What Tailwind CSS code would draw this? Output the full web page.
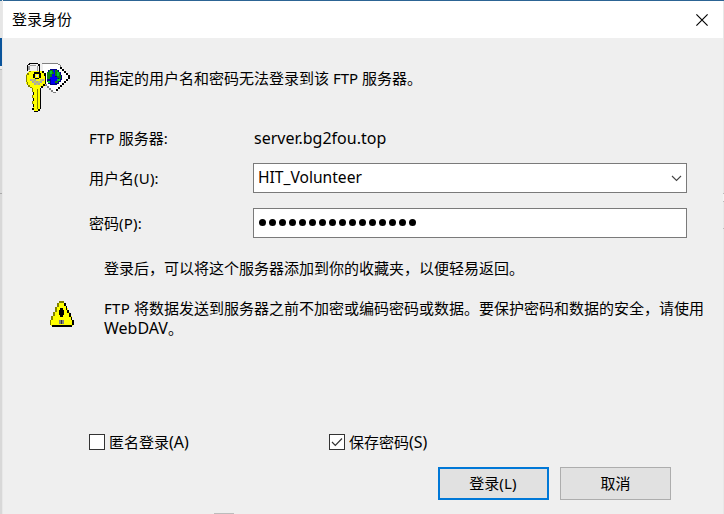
<!DOCTYPE html>
<html lang="zh-CN"><head><meta charset="utf-8"><title>登录身份</title>
<script src="https://cdn.jsdelivr.net/npm/@tailwindcss/browser@4"></script></head>
<body class="w-[724px] h-[514px] overflow-hidden bg-[#efefef] text-black text-[15px] leading-[20px] font-['Noto_Sans','Noto_Sans_CJK_SC',sans-serif]">
<div class="flex w-[724px] h-[514px]">
  <div class="w-[3px] shrink-0 flex flex-col border-r border-[#e8e8e8] bg-[#d8d8d8]">
    <div class="h-px bg-[#2b6a98]"></div><div class="h-[37px] bg-[#e6e6e6]"></div><div class="h-[28px] bg-[#0a549b]"></div><div class="h-[3px] bg-[#eeeeee]"></div><div class="h-px bg-[#b8b8b8]"></div><div class="h-[123px]"></div><div class="h-px bg-[#aaaaaa]"></div>
  </div>
  <main class="relative w-[720px] shrink-0 flex flex-col">
    <header class="h-[38px] shrink-0 border-t border-[#2c6494] bg-white flex items-center justify-between pl-[9px] pr-[15px]">
      <h1 class="whitespace-nowrap pb-[2px]">登录身份</h1>
      <svg class="w-[12px] h-[12px]" viewBox="0 0 12 12"><path d="M.4.4 11.6 11.6M11.6.4.4 11.6" stroke="#000" stroke-width="1.15"/></svg>
    </header>
    <section class="h-[90px] shrink-0 flex">
      <svg class="ml-[22px] mt-[24px] w-[46px] h-[52px] shrink-0" viewBox="0 0 46 52" shape-rendering="crispEdges">
        <path d="M18 2H33L45 14V16L31 30H28L17 19Z" fill="#fff"/>
        <path d="M17 1h16v1H17zM33 2h2v1h-2zM35 3h1v2h-1zM18 20h2v2h-2zM20 22h2v2h-2zM22 24h2v2h-2zM24 26h2v2h-2zM26 28h2v2h-2zM28 30h3v1h-3z" fill="#808080"/>
        <path d="M35 5h2v2h-2zM37 7h2v2h-2zM39 9h2v2h-2zM41 11h2v2h-2zM43 13h2v4h-2zM41 17h2v2h-2zM39 19h2v2h-2zM37 21h2v2h-2zM35 23h2v2h-2zM33 25h2v2h-2zM31 27h2v2h-2z"/>
        <path d="M25 7h7v1h2v2h2v3h1v5h-1v2h-2v2h-2v1h-7v-1h-2v-2h-1V10h1V8h2z" fill="#00008b"/>
        <path d="M27 8h4v3h-1v4h3v4h-3v3h-4v-5h-2v-3h2v-3h1z" fill="#0000f0"/>
        <path d="M22 10h2V8h4v2h1v2h-2v3h-2v2h-3zM30 8h3v2h2v3h1v4h-2v-1h-2v-2h-2zM32 17h3v2h-2v2h-3v-2h2zM22 19h3v2h-2z" fill="#108010"/>
        <path d="M25 9h2v3h-2zM32 10h2v4h-2zM32 17h3v2h-3zM23 19h2v2h-2z" fill="#00c830"/>
        <path d="M4 9h13l4 4v9l-3 3h-3v22l-2 2H9l-2-2V26H5l-3-3-1-3v-7z" fill="#ff0"/>
        <path d="M4 9h2v1H4zM2 11h2v2H2zM1 13h1v7H1zM2 20h1v3H2zM3 23h2v2H3zM5 25h2v1H5zM7 26h1v4H7zM7 33h1v3H7zM7 39h1v3H7zM12 27h1v20h-1z" fill="#808000"/>
        <path d="M17 9h2v2h-2zM19 11h2v3h-2zM20 14h1v8h-1zM18 22h2v2h-2zM16 24h2v2h-2zM15 26h1v21h-1zM13 47h2v2h-2zM9 49h4v1H9zM7 46h2v2H7zM8 30h1v3H8zM8 36h1v3H8zM8 42h1v3H8z"/>
        <path d="M7 30h1v3H7zM7 36h1v3H7zM7 42h1v4H7z" fill="#efefef"/>
        <path d="M5 17h2v2H5zM7 19h2v2H7zM9 17h2v2H9zM9 21h2v2H9zM11 19h2v2h-2zM13 21h2v2h-2zM15 19h2v2h-2zM17 17h2v2h-2z" fill="#a8a8a8"/>
        <path d="M7 17h2v2H7zM9 19h2v2H9zM11 21h2v2h-2zM13 19h2v2h-2zM15 17h2v2h-2z" fill="#c8c85a"/>
        <path d="M4 1h9v1H4zM3 2h2v1H3zM2 3h1v6H2zM13 2h2v2h-2zM14 4h1v8h-1zM9 10h5v2H9zM8 12h2v4H8zM10 16h4v1h-4zM14 11h2v5h-2z"/>
        <path d="M5 3h6v1H5zM3 4h2v4H3zM12 4h1v5h-1z" fill="#999"/>
        <path d="M11 13h2v2h-2z" fill="#ddd"/>
      </svg>
      <p class="ml-[18px] mt-[30px] whitespace-nowrap">用指定的用户名和密码无法登录到该 <span>FTP</span> 服务器。</p>
    </section>
    <section class="ml-[86px] w-[598px] shrink-0 grid grid-cols-[164px_434px]">
      <div class="h-[20px]"><span class="tracking-[0.2px]">FTP</span> 服务器:</div><div class="pl-px text-[16px]">server.bg2fou.top</div>
      <label class="mt-[15px] h-[30px] leading-[31px]">用户名<span class="tracking-[0.2px]">(U):</span></label>
      <div class="mt-[15px] h-[30px] bg-white border border-[#7a7a7a] flex items-center justify-between pl-[4px] pr-[4px]"><span class="text-[15.6px] pb-[2px]">HIT_Volunteer</span><svg class="w-[11px] h-[7px]" viewBox="0 0 11 7" fill="none"><path d="M1 1 5.5 5.5 10 1" stroke="#444" stroke-width="1.1"/></svg></div>
      <label class="mt-[15px] h-[30px] leading-[31px]">密码<span class="tracking-[0.2px]">(P):</span></label>
      <div class="mt-[15px] h-[30px] bg-white border border-[#7a7a7a] flex items-center gap-[3px] pl-[4.5px] pb-px"><script>for(let i=0;i<16;i++)document.write('<i class="w-[7px] h-[7px] rounded-full bg-black"></i>')</script></div>
    </section>
    <p class="mt-[20px] ml-[101px] whitespace-nowrap">登录后，可以将这个服务器添加到你的收藏夹，以便轻易返回。</p>
    <section class="mt-[20px] h-[136px] shrink-0 flex">
      <svg class="ml-[47px] mt-[3px] w-[24px] h-[27px] shrink-0" viewBox="0 0 24 27" shape-rendering="crispEdges">
        <path d="M9 1h5v2h2v4h2v4h2v4h2v4h1v6H1v-6h2v-4h2v-4h2V6h2z" fill="#ff0"/>
        <path d="M9 0h5v2H9zM7 2h2v4H7zM5 6h2v5H5zM3 11h2v4H3zM1 15h2v4H1zM0 19h1v5H0z" fill="#808000"/>
        <path d="M14 2h2v3h-2zM16 5h1v4h-1zM17 9h2v3h-2zM19 12h2v4h-2zM21 16h1v3h-1zM22 19h2v5h-2zM2 24h20v2H2zM10 7h3v2h1v5h-1v2h-3v-2H9V9h1z"/><path d="M9 19h5v4H9z" fill="#808080"/><path d="M11 19h1v4h-1z" fill="#333"/>
      </svg>
      <p class="ml-[30px] whitespace-nowrap"><span class="tracking-[0.3px]">FTP</span> 将数据发送到服务器之前不加密或编码密码或数据。要保护密码和数据的安全，请使用<br><span class="text-[16px]">WebDAV</span>。</p>
    </section>
    <section class="ml-[86px] h-[16px] shrink-0 flex items-center whitespace-nowrap">
      <label class="w-[240px] flex items-center gap-[4px]"><span class="size-[16px] border border-[#333] bg-white"></span><span>匿名登录<span class="text-[16px]">(A)</span></span></label>
      <label class="flex items-center gap-[4px]"><span class="size-[16px] border border-[#333] bg-white"><svg viewBox="0 0 14 14" fill="none"><path d="M2 7 5.3 10.3 12 3.5" stroke="#333" stroke-width="1.2"/></svg></span><span>保存密码<span class="text-[16px]">(S)</span></span></label>
    </section>
    <footer class="mt-[17px] ml-[435px] h-[33px] shrink-0 flex gap-[11px]">
      <button class="w-[111px] border-2 border-[#0078d7] bg-[#e1e1e1] pb-[2px] pr-px">登录<span class="tracking-[0.2px]">(L)</span></button><button class="w-[111px] border border-[#adadad] bg-[#e1e1e1] pb-[2px]">取消</button>
    </footer>
    <div class="mt-[13px] ml-[211px] w-[20px] h-px bg-[#bcbcbc]"></div>
  </main>
  <div class="w-px shrink-0 bg-[#e8e8e8] flex flex-col"><div class="h-px bg-[#2c6494]"></div><div class="h-[192px]"></div><div class="h-px bg-[#bbb]"></div><div class="h-[7px] bg-[#f4f4f4]"></div><div class="h-px bg-[#bbb]"></div><div class="h-[26px]"></div><div class="h-px bg-[#bbb]"></div></div>
</div></body></html>
